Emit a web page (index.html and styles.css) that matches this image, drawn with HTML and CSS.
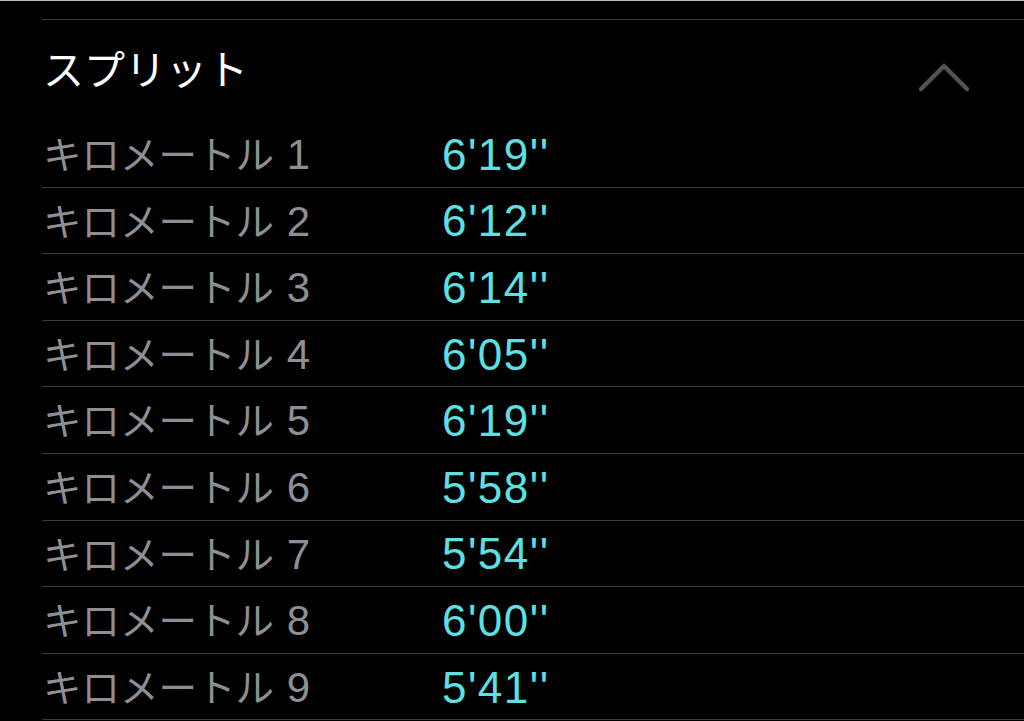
FILE: index.html
```html
<!DOCTYPE html>
<html lang="ja">
<head>
<meta charset="utf-8">
<link rel="stylesheet" href="styles.css">
</head>
<body>
<div class="topbar"></div>
<section class="splits">
  <div class="header">
    <h2 class="title">スプリット</h2>
    <svg class="chevron" width="56" height="36" viewBox="0 0 56 36">
      <path d="M4 30 L27 7 L50 30" fill="none" stroke="#525254" stroke-width="4.5" stroke-linecap="round" stroke-linejoin="round"/>
    </svg>
  </div>
  <div class="row"><span class="label">キロメートル <span class="num">1</span></span><span class="value">6'19''</span></div>
  <div class="row"><span class="label">キロメートル <span class="num">2</span></span><span class="value">6'12''</span></div>
  <div class="row"><span class="label">キロメートル <span class="num">3</span></span><span class="value">6'14''</span></div>
  <div class="row"><span class="label">キロメートル <span class="num">4</span></span><span class="value">6'05''</span></div>
  <div class="row"><span class="label">キロメートル <span class="num">5</span></span><span class="value">6'19''</span></div>
  <div class="row"><span class="label">キロメートル <span class="num">6</span></span><span class="value">5'58''</span></div>
  <div class="row"><span class="label">キロメートル <span class="num">7</span></span><span class="value">5'54''</span></div>
  <div class="row"><span class="label">キロメートル <span class="num">8</span></span><span class="value">6'00''</span></div>
  <div class="row"><span class="label">キロメートル <span class="num">9</span></span><span class="value">5'41''</span></div>
</section>
</body>
</html>
```
FILE: styles.css
```css
html, body {
  margin: 0;
  padding: 0;
  background: #000;
  overflow: hidden;
}
body {
  font-family: "Liberation Sans", "Noto Sans CJK JP", sans-serif;
  height: 721px;
}
.topbar {
  height: 1px;
  background: #bdbdbd;
}
.splits {
  margin-top: 18px;
  margin-left: 42px;
  border-top: 1px solid #3a3a3c;
}
.header {
  height: 101px;
  display: flex;
  align-items: center;
  justify-content: space-between;
  box-sizing: border-box;
}
.title {
  margin: 0 0 8px 1px;
  font-weight: 400;
  font-size: 41px;
  color: #fff;
  font-family: "Noto Sans CJK JP", sans-serif;
}
.chevron {
  margin-right: 51px;
  margin-top: 12px;
}
.row {
  height: 66.6px;
  box-sizing: border-box;
  border-bottom: 1px solid #3a3a3c;
  padding-top: 3px;
  display: grid;
  grid-template-columns: 400px 1fr;
  align-items: center;
}
.label {
  font-size: 38.5px;
  color: #8e8e93;
  padding-left: 1px;
  line-height: 1.2;
}
.num {
  font-size: 42px;
  margin-left: 2px;
}
.value {
  font-size: 44px;
  letter-spacing: 1.5px;
  color: #5ee0e3;
  line-height: 1.2;
}
```
